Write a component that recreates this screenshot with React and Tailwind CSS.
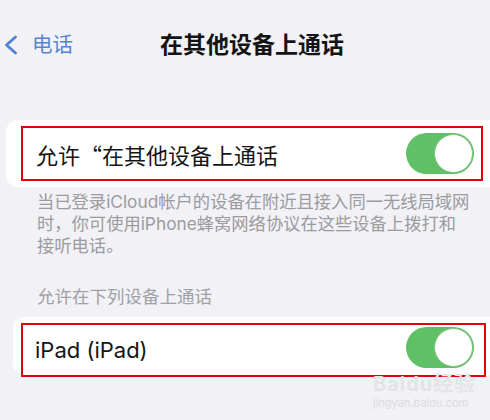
import React from 'react';

function Toggle({ className = '' }) {
  return (
    <div className={`w-[68px] h-[41px] rounded-full bg-[#5fc065] flex items-center justify-end pr-[1px] shrink-0 ${className}`}>
      <div className="w-[39px] h-[39px] rounded-full bg-white border border-[#7fbf82]" />
    </div>
  );
}

export default function App() {
  return (
    <div className="relative w-[490px] h-[420px] overflow-hidden bg-[#f1f1f6] font-['Inter','Noto_Sans_CJK_SC',sans-serif]">
      {/* nav bar */}
      <div className="flex items-center h-[30px] mt-[30px]">
        <div className="flex items-center pl-[3px]">
          <svg width="15" height="20" viewBox="0 0 15 20" fill="none">
            <path d="M12.5 2 L3.5 10 L12.5 18" stroke="#4f82d2" strokeWidth="2.8" strokeLinecap="round" strokeLinejoin="round" />
          </svg>
          <span className="ml-[14px] text-[20.5px] text-[#5585d3] leading-none">电话</span>
        </div>
        <div className="ml-[87px] text-[23px] font-bold text-[#141414] leading-none">在其他设备上通话</div>
      </div>

      {/* card 1 */}
      <div className="mt-[60px] ml-[6px] h-[67px] bg-white rounded-l-[12px] pt-[6px]">
        <div className="ml-[15px] mr-[7px] h-[55px] border-2 border-[#e3000b] flex items-center justify-between pl-[13px] pr-[7px]">
          <span className="font-['Noto_Sans_CJK_SC',sans-serif] text-[22px] text-[#151515] leading-none">允许“在其他设备上通话</span>
          <Toggle />
        </div>
      </div>

      {/* description */}
      <div className="mt-[4px] ml-[37px] text-[17.3px] leading-[22px] text-[#9b9ba0] whitespace-nowrap">
        当已登录iCloud帐户的设备在附近且接入同一无线局域网
        <br />
        时，你可使用iPhone蜂窝网络协议在这些设备上拨打和
        <br />
        接听电话。
      </div>

      {/* section header */}
      <div className="mt-[29px] ml-[37px] text-[17.5px] leading-[22px] text-[#a0a0a5]">允许在下列设备上通话</div>

      {/* card 2 */}
      <div className="mt-[9px] ml-[13px] h-[58px] bg-white rounded-l-[12px] pt-[6px]">
        <div className="ml-[8px] mr-[4px] h-[54px] border-2 border-[#e3000b] flex items-center justify-between pl-[12px] pr-[10px]">
          <span className="text-[22px] text-[#151515] leading-none">iPad (iPad)</span>
          <Toggle className="-mt-[6px]" />
        </div>
      </div>

      {/* watermark */}
      <div className="absolute left-[373px] top-[374px] flex flex-col items-start text-[#e4e4e8]">
        <span className="text-[20px] font-bold leading-none tracking-[1px]">Baidu经验</span>
        <span className="mt-[4px] text-[11px] leading-none text-[#dcdce0]">jingyan.baidu.com</span>
      </div>
    </div>
  );
}
